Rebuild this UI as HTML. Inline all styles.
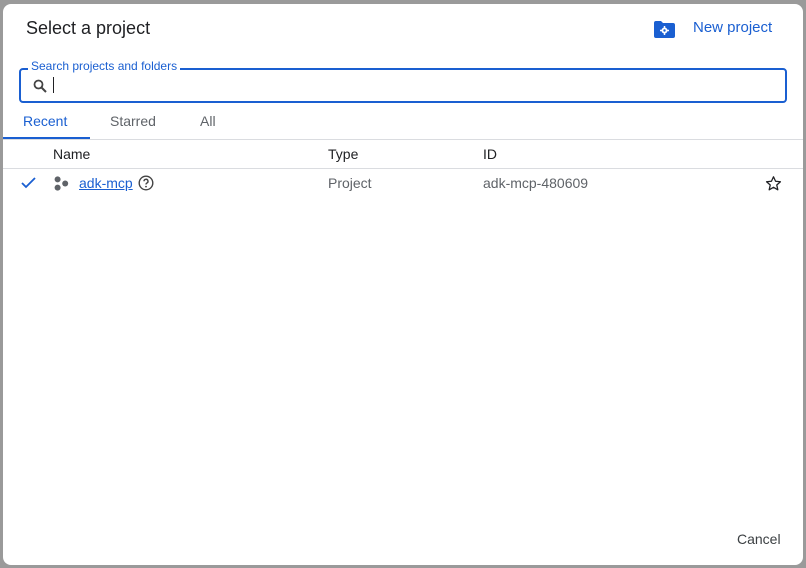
<!DOCTYPE html>
<html><head><style>
*{margin:0;padding:0;box-sizing:border-box}
body{width:806px;height:568px;background:#9a9a9a;font-family:"Liberation Sans",Arial,sans-serif;position:relative;overflow:hidden}
.dlg{position:absolute;left:3px;top:4px;width:800px;height:561px;background:#fff;border-radius:8px;overflow:hidden}
.a{position:absolute;white-space:nowrap}
</style></head><body>
<div class="dlg">
<div class="a" style="left:23px;top:14px;font-size:18px;color:#202124">Select a project</div>
<svg class="a" style="left:651px;top:17px" width="21" height="17" viewBox="0 0 21 17"><path d="M0 2a2 2 0 0 1 2-2h5l2 2h10a2 2 0 0 1 2 2v11a2 2 0 0 1-2 2H2a2 2 0 0 1-2-2z" fill="#1a5fd1"/><circle cx="10.5" cy="9.5" r="3" fill="#fff"/><circle cx="10.5" cy="9.5" r="1.2" fill="#1a5fd1"/><path d="M10.5 5v2M10.5 12v2M6 9.5h2M13 9.5h2" stroke="#fff" stroke-width="1.5"/></svg>
<div class="a" style="left:690px;top:15px;font-size:15px;color:#1a5fd1">New project</div>
<div class="a" style="left:16px;top:64px;width:768px;height:35px;border:2px solid #1a5fd1;border-radius:4px"></div>
<div class="a" style="left:25px;top:55px;font-size:12px;color:#1a5fd1;background:#fff;padding:0 3px">Search projects and folders</div>
<svg class="a" style="left:30px;top:75px" width="14" height="14" viewBox="0 0 14 14"><circle cx="5.5" cy="5.5" r="4" fill="none" stroke="#444" stroke-width="1.8"/><path d="M8.5 8.5l4.5 4.5" stroke="#444" stroke-width="2"/></svg>
<div class="a" style="left:50px;top:73px;width:1px;height:16px;background:#202124"></div>
<div class="a" style="left:20px;top:109px;font-size:14px;color:#1a5fd1">Recent</div>
<div class="a" style="left:107px;top:109px;font-size:14px;color:#5f6368">Starred</div>
<div class="a" style="left:197px;top:109px;font-size:14px;color:#5f6368">All</div>
<div class="a" style="left:0;top:133px;width:87px;height:3px;background:#1a5fd1"></div>
<div class="a" style="left:0;top:135px;width:800px;height:1px;background:#dadce0"></div>
<div class="a" style="left:50px;top:142px;font-size:14px;color:#202124">Name</div>
<div class="a" style="left:325px;top:142px;font-size:14px;color:#202124">Type</div>
<div class="a" style="left:480px;top:142px;font-size:14px;color:#202124">ID</div>
<div class="a" style="left:0;top:164px;width:800px;height:1px;background:#dadce0"></div>
<svg class="a" style="left:18px;top:173px" width="15" height="12" viewBox="0 0 15 12"><path d="M1 6l4 4L14 1" fill="none" stroke="#1a5fd1" stroke-width="1.8"/></svg>
<svg class="a" style="left:51px;top:172px" width="15" height="15" viewBox="0 0 15 15"><circle cx="3.6" cy="3.4" r="3" fill="#5f6368"/><circle cx="11.2" cy="7.5" r="3" fill="#5f6368"/><circle cx="3.6" cy="11.6" r="3" fill="#5f6368"/></svg>
<div class="a" style="left:76px;top:171px;font-size:14px;color:#1a5fd1;text-decoration:underline">adk-mcp</div>
<svg class="a" style="left:135px;top:171px" width="16" height="16" viewBox="0 0 16 16"><circle cx="8" cy="8" r="6.8" fill="none" stroke="#444" stroke-width="1.4"/><path d="M6 6.3a2 2 0 1 1 2.8 1.8c-.6.3-.8.7-.8 1.4" fill="none" stroke="#444" stroke-width="1.4"/><circle cx="8" cy="11.6" r=".9" fill="#444"/></svg>
<div class="a" style="left:325px;top:171px;font-size:14px;color:#5f6368">Project</div>
<div class="a" style="left:480px;top:171px;font-size:14px;color:#5f6368">adk-mcp-480609</div>
<svg class="a" style="left:762px;top:171px" width="17" height="17" viewBox="0 0 24 24"><path d="M12 2.5l2.9 6.3 6.9.7-5.2 4.6 1.5 6.8L12 17.4l-6.1 3.5 1.5-6.8L2.2 9.5l6.9-.7z" fill="none" stroke="#202124" stroke-width="1.8" stroke-linejoin="round"/></svg>
<div class="a" style="left:734px;top:527px;font-size:14px;color:#3c4043">Cancel</div>
</div>
</body></html>
